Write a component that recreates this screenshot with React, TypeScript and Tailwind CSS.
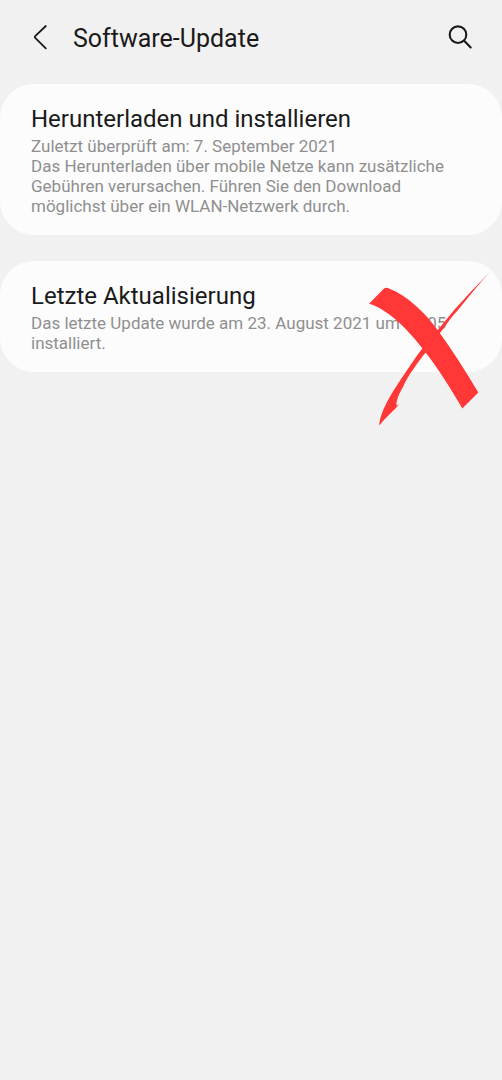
import type { ReactNode } from "react";

interface SettingCardProps {
  title: string;
  lines: string[];
  children?: ReactNode;
}

function BackIcon() {
  return (
    <svg
      viewBox="0 0 24 32"
      className="h-8 w-6"
      fill="none"
      stroke="currentColor"
      strokeWidth="1.8"
      strokeLinecap="round"
      strokeLinejoin="round"
    >
      <path d="M17.8 5 7.2 15.2a1.2 1.2 0 0 0 0 1.7L17.8 27.4" />
    </svg>
  );
}

function SearchIcon() {
  return (
    <svg
      viewBox="0 0 32 32"
      className="size-8"
      fill="none"
      stroke="currentColor"
      strokeWidth="2.1"
      strokeLinecap="round"
    >
      <circle cx="16" cy="13.7" r="8.3" />
      <path d="m22.2 19.8 6.5 6.6" />
    </svg>
  );
}

function RedCross() {
  return (
    <svg
      viewBox="0 0 142 174"
      className="pointer-events-none absolute top-0 right-0 h-[174px] w-[142px]"
      fill="#ff3737"
      aria-hidden="true"
    >
      {/* broad stroke */}
      <path d="M9 42.7 24 27.6Q26 26 29 27.6C38 31 47 37 56 45C64 52 71 60 78 69.5C93 90 106 111 118.3 131.6L102.3 147.4C91 128 78 107 65 90.7C50 71 30 49 9 42.7Z" />
      {/* thin stroke */}
      <path d="M129.7 11.3C117 24 106 36 95 48L72 76L63.5 86C58 93 53 100 47.5 108.5C39 121 31 133 26 143C22 151 19 160 19.3 164.6C24 158 30 153 35.5 147.5L39 143L36.5 144.5C36 139 40 131 43 126C46 119 49 114 53.5 108C58 101 62 96 67 90L80 72C86 64 92 55 98 49C108 37 118 24 129.7 11.3Z" />
    </svg>
  );
}

function SettingCard({ title, lines, children }: SettingCardProps) {
  return (
    <section className="relative rounded-[34px] bg-[#fcfcfc] px-[31px] py-[19px]">
      <h2 className="mb-px text-2xl leading-8 text-[#1a1a1a]">{title}</h2>
      {lines.map((line) => (
        <p key={line} className="text-[17px] leading-5 text-[#8f8f8f]">
          {line}
        </p>
      ))}
      {children}
    </section>
  );
}

export default function App() {
  return (
    <div className="min-h-screen bg-[#f1f1f1] font-['Roboto',sans-serif]">
      <header className="flex h-[84px] items-start px-7 pt-[21px] text-[#1a1a1a]">
        <button type="button" aria-label="Zurück">
          <BackIcon />
        </button>
        <h1 className="ml-[21px] flex-1 text-[25px] leading-9">Software-Update</h1>
        <button type="button" aria-label="Suchen">
          <SearchIcon />
        </button>
      </header>

      <main className="flex flex-col gap-[26px]">
        <SettingCard
          title="Herunterladen und installieren"
          lines={[
            "Zuletzt überprüft am: 7. September 2021",
            "Das Herunterladen über mobile Netze kann zusätzliche Gebühren verursachen. Führen Sie den Download möglichst über ein WLAN-Netzwerk durch.",
          ]}
        />
        <SettingCard
          title="Letzte Aktualisierung"
          lines={["Das letzte Update wurde am 23. August 2021 um 09:05 installiert."]}
        >
          <RedCross />
        </SettingCard>
      </main>
    </div>
  );
}
